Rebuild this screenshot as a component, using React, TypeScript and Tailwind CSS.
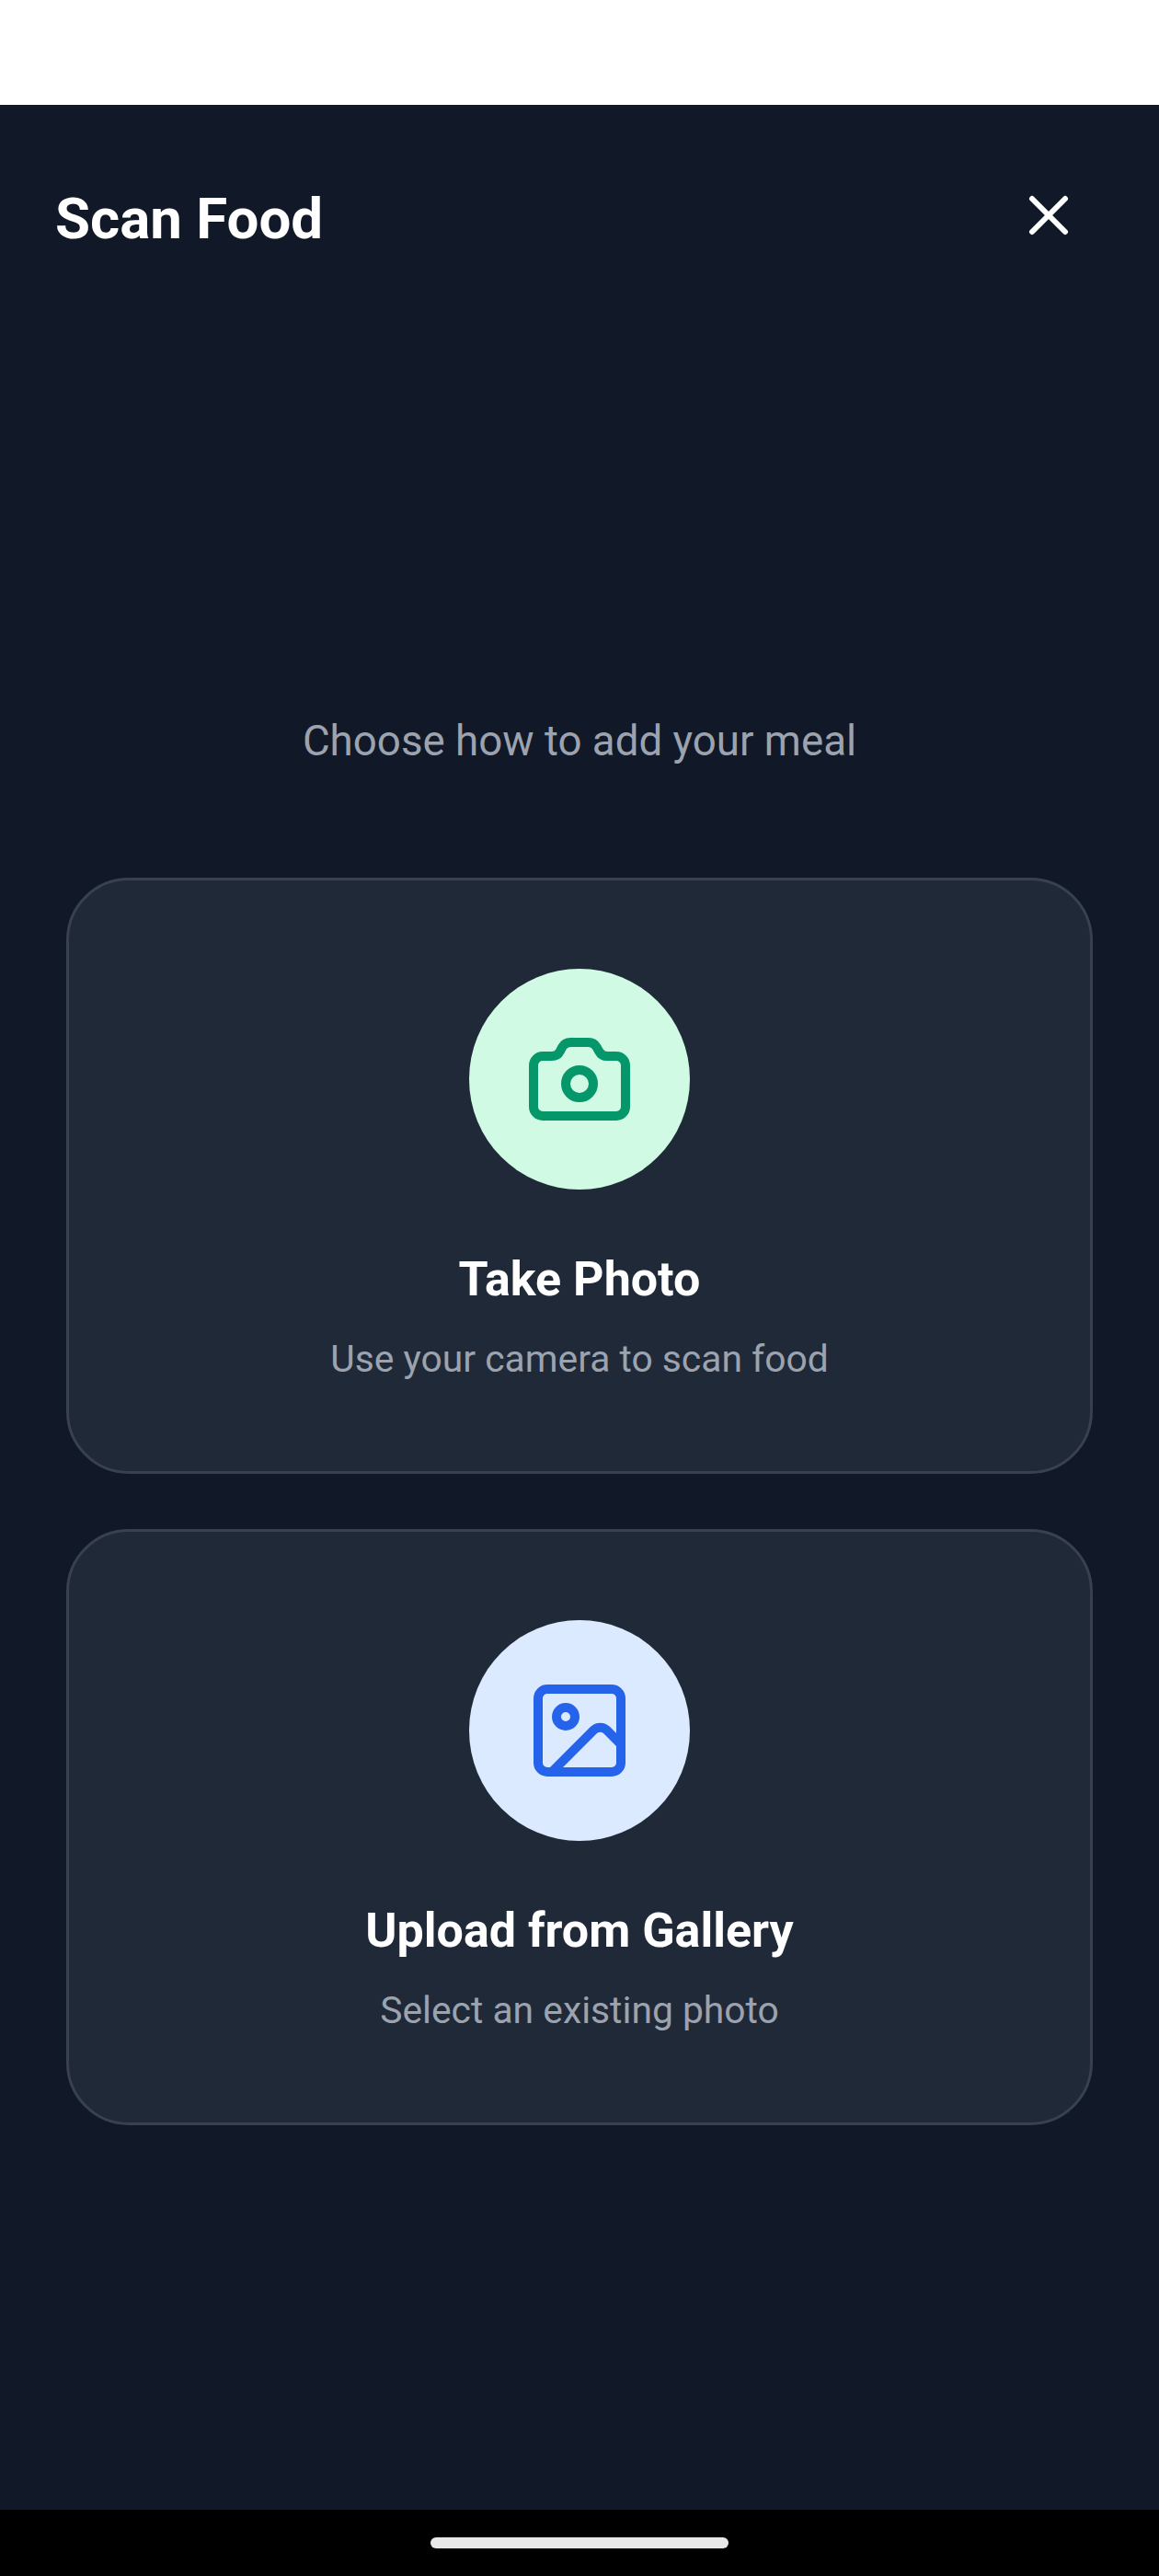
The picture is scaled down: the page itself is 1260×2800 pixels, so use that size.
import { Camera, Image, X } from "lucide-react";
import type { ReactNode } from "react";

function OptionCard({
  circle,
  title,
  subtitle,
  children,
}: {
  circle: string;
  title: string;
  subtitle: string;
  children: ReactNode;
}) {
  return (
    <div className="h-[648px] rounded-[68px] border-[3px] border-[#374151] bg-[#1f2937] flex flex-col items-center pt-[96px]">
      <div className={`w-[240px] h-[240px] rounded-full flex items-center justify-center ${circle}`}>
        {children}
      </div>
      <h2 className="mt-[62px] text-[52px] leading-[72px] font-bold text-white">{title}</h2>
      <p className="mt-[22px] text-[40.8px] leading-[56px] text-[#9ca3af]">{subtitle}</p>
    </div>
  );
}

export default function App() {
  return (
    <div className="w-[1260px] h-[2800px] flex flex-col bg-white font-['Roboto',sans-serif]">
      <div className="h-[114px]" />
      <div className="flex-1 bg-[#111827] flex flex-col">
        <div className="flex items-start justify-between pl-[60px] pr-[84px] pt-[88px]">
          <h1 className="text-[61.8px] leading-[72px] font-bold text-white">Scan Food</h1>
          <X size={72} strokeWidth={2} className="text-white -mt-[4px]" />
        </div>
        <p className="mt-[500px] text-center text-[45.7px] leading-[64px] text-[#9ca3af]">
          Choose how to add your meal
        </p>
        <div className="mt-[116px] px-[72px] flex flex-col gap-[60px]">
          <OptionCard circle="bg-[#d1fae5]" title="Take Photo" subtitle="Use your camera to scan food">
            <Camera size={120} strokeWidth={2} className="text-[#059669]" />
          </OptionCard>
          <OptionCard circle="bg-[#dbeafe]" title="Upload from Gallery" subtitle="Select an existing photo">
            <Image size={120} strokeWidth={2} className="text-[#2563eb]" />
          </OptionCard>
        </div>
      </div>
      <div className="h-[72px] bg-black flex items-center justify-center">
        <div className="w-[324px] h-[12px] rounded-full bg-[#e8e8e8]" />
      </div>
    </div>
  );
}
